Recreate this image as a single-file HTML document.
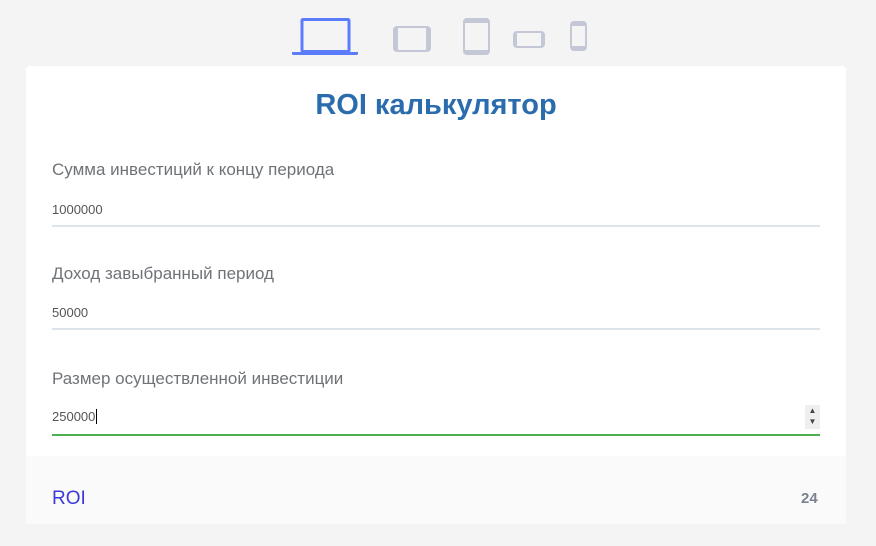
<!DOCTYPE html>
<html><head><meta charset="utf-8"><style>
body{margin:0;width:876px;height:546px;background:#f4f4f4;font-family:"Liberation Sans",sans-serif;position:relative;overflow:hidden}
.card{position:absolute;left:26px;top:66px;width:820px;height:458px;background:#fff;border-radius:4px;overflow:hidden}
h1{position:absolute;left:0;width:872px;top:89px;margin:0;text-align:center;font-size:29px;color:#2a6cad;font-weight:bold}
.lab{position:absolute;left:52px;font-size:17px;color:#6f7378}
.val{position:absolute;left:52px;font-size:13px;color:#555}
.line{position:absolute;left:52px;width:768px;height:2px;background:#dde3ea}
.foot{position:absolute;left:26px;top:456px;width:820px;height:68px;background:#fafafa;border-radius:0 0 4px 4px}
</style></head><body>
<svg width="876" height="66" style="position:absolute;left:0;top:0">
<g fill="none" stroke="#5b7cfb" stroke-width="3"><rect x="302" y="19.5" width="47" height="32" rx="1"/></g>
<path d="M292 52h66v1.5q0 1.5-1.5 1.5h-63q-1.5 0-1.5-1.5z" fill="#5b7cfb"/>
<g fill="none" stroke="#c4c7d6" stroke-width="2">
<rect x="394" y="27" width="36" height="24" rx="3"/>
<rect x="464" y="19" width="25" height="35" rx="3"/>
<rect x="514" y="32" width="30" height="15" rx="3"/>
<rect x="571" y="22" width="15" height="28" rx="3"/>
</g>
<g fill="#c4c7d6"><rect x="395" y="28" width="3" height="22"/><rect x="426" y="28" width="3" height="22"/>
<rect x="465" y="20" width="23" height="3"/><rect x="465" y="50" width="23" height="3"/>
<rect x="515" y="33" width="2" height="13"/><rect x="541" y="33" width="2" height="13"/>
<rect x="572" y="23" width="13" height="3"/><rect x="572" y="46" width="13" height="3"/></g>
</svg>
<div class="card"></div>
<h1>ROI калькулятор</h1>
<div class="lab" style="top:160px">Сумма инвестиций к концу периода</div>
<div class="val" style="top:202px">1000000</div>
<div class="line" style="top:225px"></div>
<div class="lab" style="top:264px">Доход завыбранный период</div>
<div class="val" style="top:305px">50000</div>
<div class="line" style="top:328px"></div>
<div class="lab" style="top:369px">Размер осуществленной инвестиции</div>
<div class="val" style="top:409px">250000<span style="border-left:1px solid #000;margin-left:1px"></span></div>
<div style="position:absolute;left:805px;top:405px;width:15px;height:24px;background:#efefef;font-size:8px;color:#444;text-align:center;line-height:11px">▲<br>▼</div>
<div class="line" style="top:434px;background:#4caf50"></div>
<div class="foot"></div>
<div style="position:absolute;left:52px;top:488px;font-size:19px;color:#3a3ad8">ROI</div>
<div style="position:absolute;left:801px;top:490px;font-size:15px;font-weight:bold;color:#7a8290">24</div>
</body></html>
